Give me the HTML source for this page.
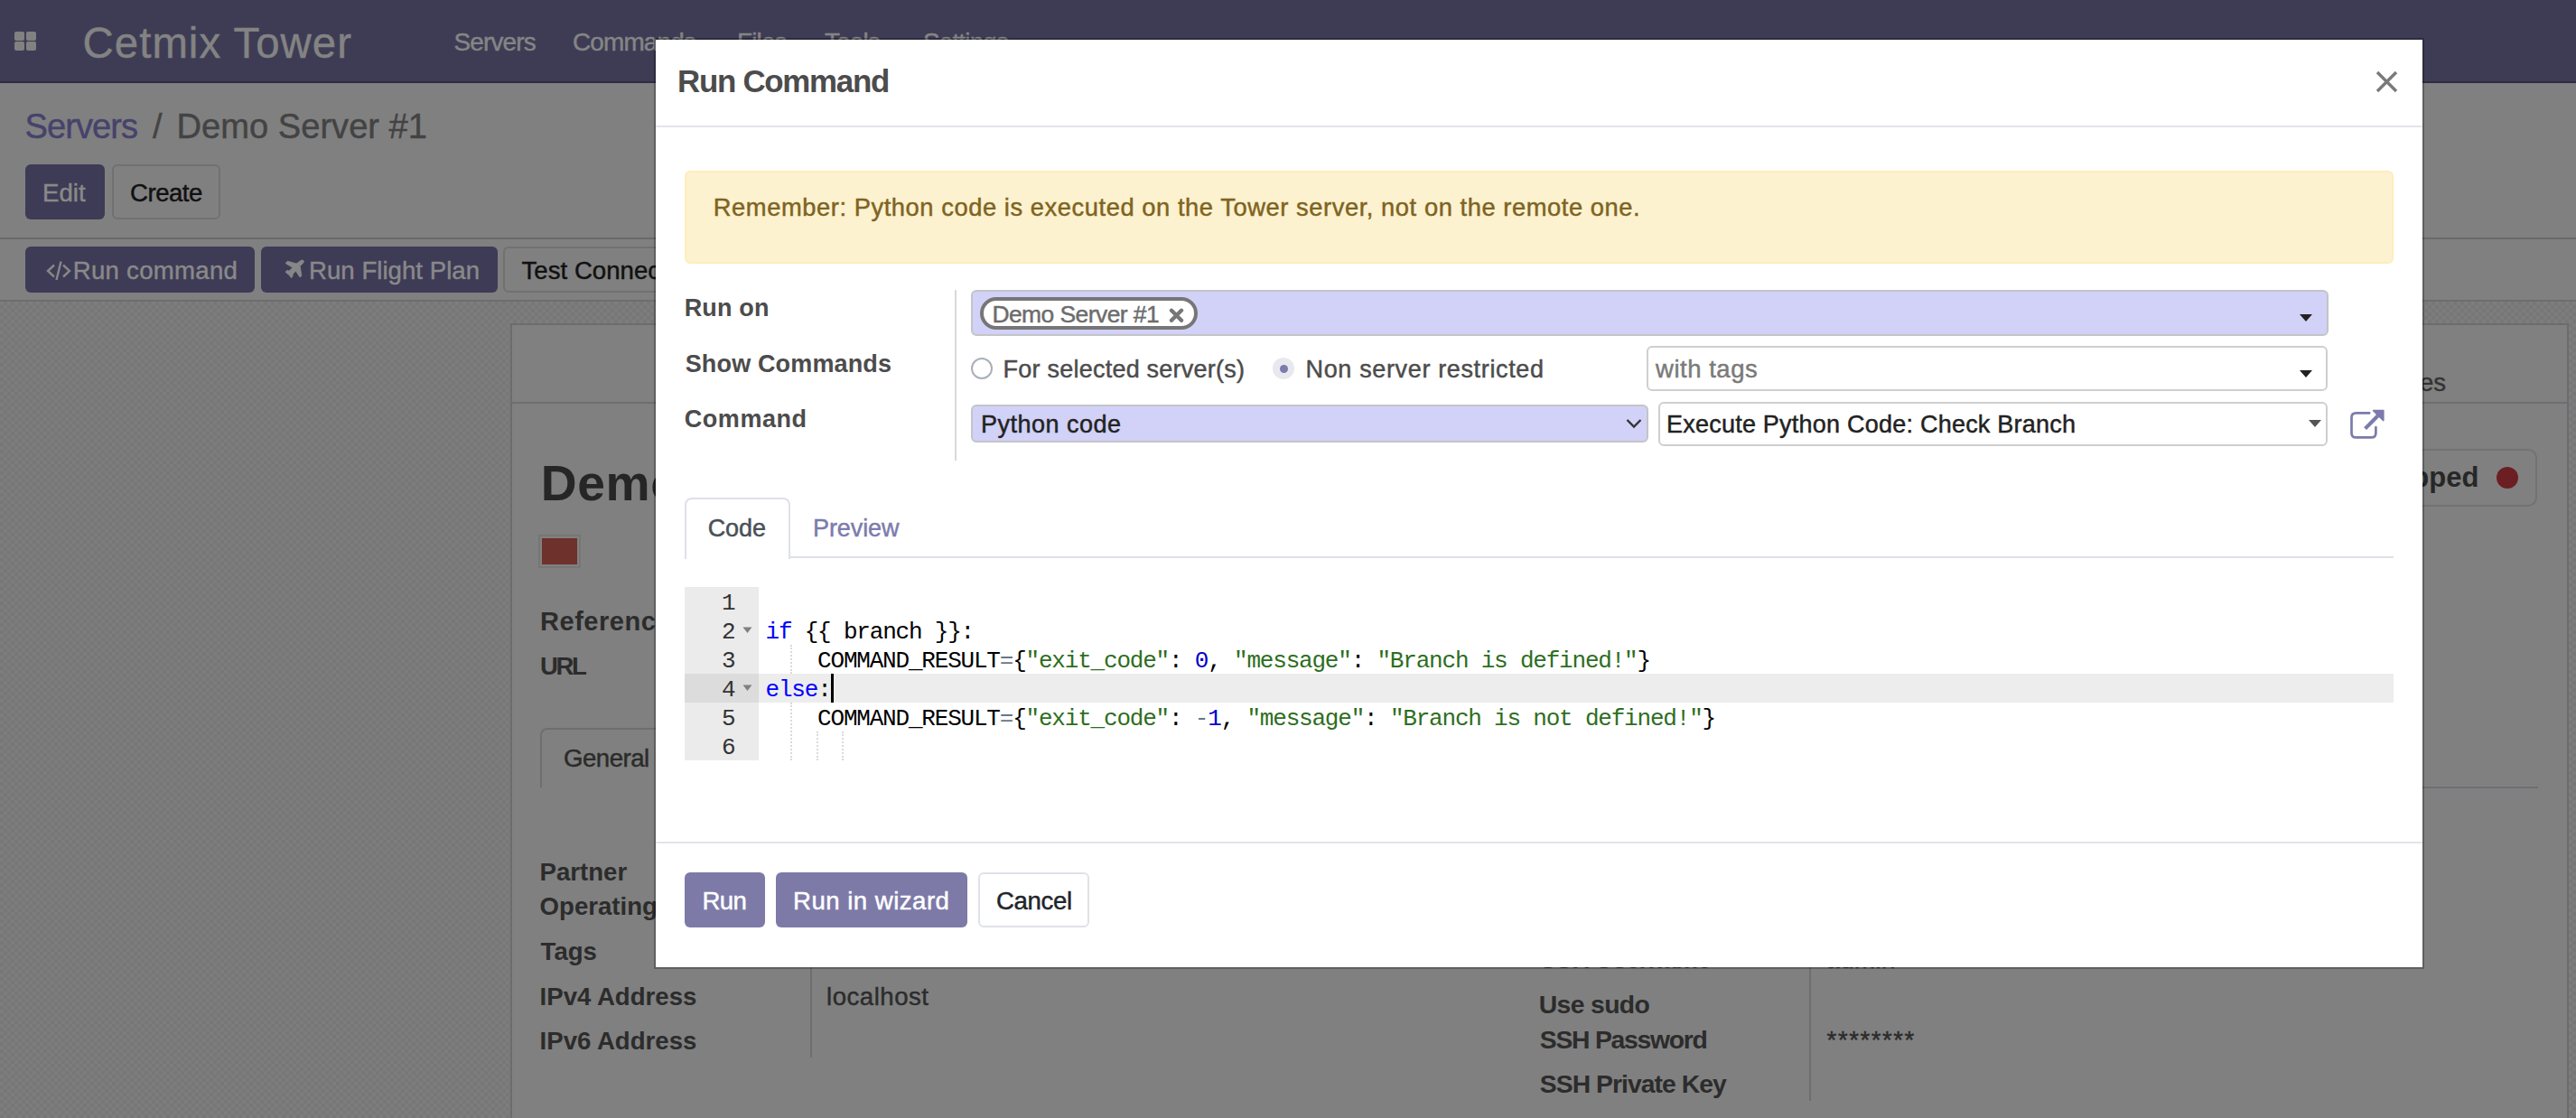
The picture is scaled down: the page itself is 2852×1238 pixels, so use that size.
<!DOCTYPE html>
<html><head><meta charset="utf-8"><title>Run Command</title>
<style>
html,body{margin:0;padding:0;width:2852px;height:1238px;overflow:hidden;background:#808080}
body{position:relative;font-family:'Liberation Sans',sans-serif}
.t{position:absolute;white-space:pre}
.code{position:absolute;white-space:pre;font-family:'Liberation Mono',monospace;font-size:26px;line-height:32px;letter-spacing:-1.2px;z-index:5}
</style></head><body>
<div style="position:absolute;left:0;top:0;width:2852px;height:90px;background:#3e3c55"></div>
<div style="position:absolute;left:0;top:90px;width:2852px;height:2px;background:#2e2c44"></div>
<div style="position:absolute;left:16px;top:35px;width:11px;height:10px;border-radius:2px;background:#818181"></div>
<div style="position:absolute;left:29px;top:35px;width:11px;height:10px;border-radius:2px;background:#818181"></div>
<div style="position:absolute;left:16px;top:46px;width:11px;height:10px;border-radius:2px;background:#818181"></div>
<div style="position:absolute;left:29px;top:46px;width:11px;height:10px;border-radius:2px;background:#818181"></div>
<div class="t" style="left:91.60px;top:23.78px;font-size:47.38px;line-height:47.38px;color:#838383;letter-spacing:1.022px;-webkit-text-stroke:0.45px #838383">Cetmix Tower</div>
<div class="t" style="left:502.60px;top:33.27px;font-size:27.91px;line-height:27.91px;color:#858585;letter-spacing:-0.841px;-webkit-text-stroke:0.45px #858585">Servers</div>
<div class="t" style="left:634.00px;top:33.27px;font-size:27.91px;line-height:27.91px;color:#858585;letter-spacing:-0.841px;-webkit-text-stroke:0.45px #858585">Commands</div>
<div class="t" style="left:816.00px;top:33.27px;font-size:27.91px;line-height:27.91px;color:#858585;letter-spacing:-0.841px;-webkit-text-stroke:0.45px #858585">Files</div>
<div class="t" style="left:913.00px;top:33.27px;font-size:27.91px;line-height:27.91px;color:#858585;letter-spacing:-0.841px;-webkit-text-stroke:0.45px #858585">Tools</div>
<div class="t" style="left:1022.00px;top:33.27px;font-size:27.91px;line-height:27.91px;color:#858585;letter-spacing:-0.841px;-webkit-text-stroke:0.45px #858585">Settings</div>
<div style="position:absolute;left:0;top:92px;width:2852px;height:241px;background:#808080"></div>
<div class="t" style="left:27.60px;top:120.76px;font-size:38.08px;line-height:38.08px;color:#45436b;letter-spacing:-0.959px;-webkit-text-stroke:0.45px #45436b">Servers</div>
<div class="t" style="left:169.00px;top:120.76px;font-size:38.08px;line-height:38.08px;color:#444444;letter-spacing:0.000px;-webkit-text-stroke:0.45px #444444">/</div>
<div class="t" style="left:195.60px;top:120.76px;font-size:38.08px;line-height:38.08px;color:#434343;letter-spacing:0.011px;-webkit-text-stroke:0.45px #434343">Demo Server #1</div>
<div style="position:absolute;left:28px;top:182px;width:88px;height:61px;border-radius:6px;background:#3e3b56"></div>
<div class="t" style="left:47.00px;top:199.62px;font-size:27.62px;line-height:27.62px;color:#898989;letter-spacing:0.032px;-webkit-text-stroke:0.45px #898989">Edit</div>
<div style="position:absolute;left:124px;top:182px;width:120px;height:61px;box-sizing:border-box;border-radius:6px;border:2px solid #717171"></div>
<div class="t" style="left:144.00px;top:199.62px;font-size:27.62px;line-height:27.62px;color:#111111;letter-spacing:-0.503px;-webkit-text-stroke:0.45px #111111">Create</div>
<div style="position:absolute;left:0;top:263px;width:2852px;height:2px;background:#6a6a6a"></div>
<div style="position:absolute;left:28px;top:273px;width:254px;height:51px;border-radius:6px;background:#3e3b56"></div>
<div class="t" style="left:80.70px;top:285.62px;font-size:27.62px;line-height:27.62px;color:#898989;letter-spacing:0.271px;-webkit-text-stroke:0.45px #898989">Run command</div>
<svg style="position:absolute;left:50px;top:287px" width="30" height="25" viewBox="0 0 30 25"><path d="M10 6.5 L3 13 L10 19.5 M20 6.5 L27 13 L20 19.5" stroke="#878787" stroke-width="2.4" fill="none"/><path d="M17.5 2.5 L12.5 23" stroke="#878787" stroke-width="2.4" fill="none"/></svg>
<div style="position:absolute;left:289px;top:273px;width:262px;height:51px;border-radius:6px;background:#3e3b56"></div>
<div class="t" style="left:342.00px;top:285.62px;font-size:27.62px;line-height:27.62px;color:#898989;letter-spacing:0.021px;-webkit-text-stroke:0.45px #898989">Run Flight Plan</div>
<svg style="position:absolute;left:305px;top:280px" width="40" height="35" viewBox="0 0 40 35"><path d="M30.8 8.3 Q32.2 9.2 30.6 11.2 L27.2 14.7 L28.8 25 Q28.6 26.6 26.8 26.8 L22.5 20 L19.2 23.6 L18.9 26.1 L17.5 27.8 L15.6 25 L11.2 21.4 L12.6 19.4 L15.1 20 L19 16.3 L11.6 11.9 Q11 10.6 13.5 9.3 L23.2 11.9 L27.8 8.6 Q29.6 7.6 30.8 8.3 Z" fill="#878787" stroke="#878787" stroke-width="0.8" stroke-linejoin="round"/></svg>
<div style="position:absolute;left:557px;top:273px;width:260px;height:51px;box-sizing:border-box;border-radius:6px;border:2px solid #717171"></div>
<div class="t" style="left:577.50px;top:285.62px;font-size:27.62px;line-height:27.62px;color:#111111;letter-spacing:0.021px;-webkit-text-stroke:0.45px #111111">Test Connection</div>
<div style="position:absolute;left:0;top:332px;width:2852px;height:2px;background:#6e6e6e"></div>
<div style="position:absolute;left:0;top:334px;width:2852px;height:904px;background-color:#7c7c7c;background-image:repeating-conic-gradient(#777777 0 25%, #7d7d7d 0 50%);background-size:8px 8px"></div>
<div style="position:absolute;left:565px;top:358px;width:2279px;height:900px;box-sizing:border-box;background:#808080;border:2px solid #6b6c70"></div>
<div style="position:absolute;left:567px;top:445px;width:2275px;height:2px;background:#6c6e72"></div>
<div class="t" style="left:2678.91px;top:409.52px;font-size:27.50px;line-height:27.50px;color:#333333;letter-spacing:0.000px;-webkit-text-stroke:0.45px #333333">es</div>
<div style="position:absolute;left:2600px;top:497px;width:209px;height:64px;box-sizing:border-box;border:2px solid #727272;border-radius:10px"></div>
<div class="t" style="left:2620.45px;top:513.15px;font-size:31.00px;line-height:31.00px;color:#272727;letter-spacing:0.000px;font-weight:bold">Stopped</div>
<div style="position:absolute;left:2764px;top:517px;width:24px;height:24px;border-radius:50%;background:#6b1f22"></div>
<div class="t" style="left:598.70px;top:508.23px;font-size:55.23px;line-height:55.23px;color:#262626;letter-spacing:0.600px;font-weight:bold">Demo Server #1</div>
<div style="position:absolute;left:596px;top:592px;width:47px;height:37px;box-sizing:border-box;border:2px solid #767676;background:#808080"><div style="position:absolute;left:2px;top:2px;width:39px;height:29px;background:#6e312b"></div></div>
<div class="t" style="left:598.00px;top:674.09px;font-size:29.07px;line-height:29.07px;color:#2c2c2c;letter-spacing:0.500px;font-weight:bold">Reference</div>
<div class="t" style="left:598.00px;top:723.62px;font-size:27.62px;line-height:27.62px;color:#2c2c2c;letter-spacing:-2.439px;font-weight:bold">URL</div>
<div style="position:absolute;left:598px;top:806px;width:200px;height:66px;box-sizing:border-box;border:2px solid #6c6e72;border-bottom:none;border-radius:8px 8px 0 0"></div>
<div class="t" style="left:624.00px;top:825.62px;font-size:27.62px;line-height:27.62px;color:#2b2b2b;letter-spacing:-0.515px;-webkit-text-stroke:0.45px #2b2b2b">General</div>
<div style="position:absolute;left:726px;top:871px;width:2084px;height:2px;background:#6c6e72"></div>
<div class="t" style="left:597.60px;top:1089.62px;font-size:27.62px;line-height:27.62px;color:#2c2c2c;letter-spacing:-0.017px;font-weight:bold">IPv4 Address</div>
<div class="t" style="left:597.60px;top:951.62px;font-size:27.62px;line-height:27.62px;color:#2c2c2c;letter-spacing:-0.017px;font-weight:bold">Partner</div>
<div class="t" style="left:597.60px;top:989.62px;font-size:27.62px;line-height:27.62px;color:#2c2c2c;letter-spacing:-0.017px;font-weight:bold">Operating System</div>
<div class="t" style="left:598.60px;top:1039.62px;font-size:27.62px;line-height:27.62px;color:#2c2c2c;letter-spacing:-0.017px;font-weight:bold">Tags</div>
<div class="t" style="left:597.60px;top:1138.62px;font-size:27.62px;line-height:27.62px;color:#2c2c2c;letter-spacing:-0.017px;font-weight:bold">IPv6 Address</div>
<div style="position:absolute;left:897px;top:940px;width:2px;height:231px;background:#6e6e6e"></div>
<div class="t" style="left:915.00px;top:1089.62px;font-size:27.62px;line-height:27.62px;color:#2c2c2c;letter-spacing:0.500px;-webkit-text-stroke:0.45px #2c2c2c">localhost</div>
<div class="t" style="left:1704.80px;top:1048.00px;font-size:28.34px;line-height:28.34px;color:#2c2c2c;letter-spacing:-1.196px;font-weight:bold">SSH Username</div>
<div class="t" style="left:1703.80px;top:1097.80px;font-size:28.34px;line-height:28.34px;color:#2c2c2c;letter-spacing:-0.643px;font-weight:bold">Use sudo</div>
<div class="t" style="left:1704.80px;top:1137.00px;font-size:28.34px;line-height:28.34px;color:#2c2c2c;letter-spacing:-1.258px;font-weight:bold">SSH Password</div>
<div class="t" style="left:1704.80px;top:1186.00px;font-size:28.34px;line-height:28.34px;color:#2c2c2c;letter-spacing:-0.963px;font-weight:bold">SSH Private Key</div>
<div style="position:absolute;left:2003px;top:940px;width:2px;height:279px;background:#6e6e6e"></div>
<div class="t" style="left:2021.60px;top:1048.62px;font-size:27.62px;line-height:27.62px;color:#2c2c2c;letter-spacing:0.389px;-webkit-text-stroke:0.45px #2c2c2c">admin</div>
<div class="t" style="left:2022.60px;top:1137.72px;font-size:27.50px;line-height:27.50px;color:#2c2c2c;letter-spacing:1.584px;-webkit-text-stroke:0.45px #2c2c2c">********</div>
<div style="position:absolute;left:724px;top:42px;width:1960px;height:1031px;background:rgba(0,0,0,0.26)"></div>
<div style="position:absolute;left:726px;top:44px;width:1956px;height:1027px;background:#fff"></div>
<div class="t" style="left:750.00px;top:73.46px;font-size:34.88px;line-height:34.88px;color:#4c4c4c;letter-spacing:-1.269px;font-weight:bold">Run Command</div>
<svg style="position:absolute;left:2630px;top:78px" width="25" height="25" viewBox="0 0 25 25"><path d="M2 2 L23 23 M23 2 L2 23" stroke="#7a7a7a" stroke-width="3.4" fill="none"/></svg>
<div style="position:absolute;left:726px;top:139px;width:1956px;height:2px;background:#e2e4ea"></div>
<div style="position:absolute;left:758px;top:189px;width:1892px;height:103px;box-sizing:border-box;background:#fcf2cf;border:2px solid #fdedbb;border-radius:6px"></div>
<div class="t" style="left:789.80px;top:215.86px;font-size:27.33px;line-height:27.33px;color:#7f6322;letter-spacing:0.553px;-webkit-text-stroke:0.45px #7f6322">Remember: Python code is executed on the Tower server, not on the remote one.</div>
<div class="t" style="left:757.70px;top:328.11px;font-size:27.03px;line-height:27.03px;color:#4c4c4c;letter-spacing:0.139px;font-weight:bold">Run on</div>
<div class="t" style="left:758.70px;top:390.11px;font-size:27.03px;line-height:27.03px;color:#4c4c4c;letter-spacing:0.139px;font-weight:bold">Show Commands</div>
<div class="t" style="left:757.70px;top:451.11px;font-size:27.03px;line-height:27.03px;color:#4c4c4c;letter-spacing:0.553px;font-weight:bold">Command</div>
<div style="position:absolute;left:1057px;top:321px;width:2px;height:189px;background:#d9d9d9"></div>
<div style="position:absolute;left:1075px;top:321px;width:1503px;height:51px;box-sizing:border-box;background:#d2d1f7;border:2px solid #c4c4c8;border-radius:6px"></div>
<div style="position:absolute;left:1085px;top:329px;width:241px;height:36px;box-sizing:border-box;background:#fff;border:4px solid #767676;border-radius:18px"></div>
<div class="t" style="left:1098.40px;top:335.20px;font-size:26.45px;line-height:26.45px;color:#6c6c6c;letter-spacing:-0.552px;-webkit-text-stroke:0.45px #6c6c6c">Demo Server #1</div>
<svg style="position:absolute;left:1294px;top:341px" width="17" height="16" viewBox="0 0 17 16"><path d="M3 2.8 L14 13.8 M14 2.8 L3 13.8" stroke="#777" stroke-width="4.4" stroke-linecap="round" fill="none"/></svg>
<svg style="position:absolute;left:2546px;top:348px" width="14" height="8" viewBox="0 0 14 8"><path d="M0 0 H14 L7 8 Z" fill="#222"/></svg>
<div style="position:absolute;left:1075px;top:396px;width:24px;height:24px;box-sizing:border-box;border-radius:50%;background:#fff;border:2px solid #a9b0b9"></div>
<div class="t" style="left:1110.50px;top:396.11px;font-size:27.03px;line-height:27.03px;color:#4c4c4c;letter-spacing:0.228px;-webkit-text-stroke:0.45px #4c4c4c">For selected server(s)</div>
<div style="position:absolute;left:1409px;top:396px;width:24px;height:24px;border-radius:50%;background:#e8e9ef"></div>
<div style="position:absolute;left:1416.5px;top:403.5px;width:9px;height:9px;border-radius:50%;background:#7c7bab"></div>
<div class="t" style="left:1445.50px;top:396.11px;font-size:27.03px;line-height:27.03px;color:#4c4c4c;letter-spacing:0.640px;-webkit-text-stroke:0.45px #4c4c4c">Non server restricted</div>
<div style="position:absolute;left:1823px;top:383px;width:754px;height:50px;box-sizing:border-box;background:#fff;border:2px solid #cfcfcf;border-radius:6px"></div>
<div class="t" style="left:1833.00px;top:395.32px;font-size:27.50px;line-height:27.50px;color:#7a7a7a;letter-spacing:0.528px;-webkit-text-stroke:0.45px #7a7a7a">with tags</div>
<svg style="position:absolute;left:2546px;top:410px" width="14" height="8" viewBox="0 0 14 8"><path d="M0 0 H14 L7 8 Z" fill="#222"/></svg>
<div style="position:absolute;left:1075px;top:448px;width:750px;height:42px;box-sizing:border-box;background:#d2d1f7;border:2px solid #c4c4c8;border-radius:6px"></div>
<div class="t" style="left:1086.00px;top:457.11px;font-size:27.03px;line-height:27.03px;color:#222222;letter-spacing:0.483px;-webkit-text-stroke:0.45px #222222">Python code</div>
<svg style="position:absolute;left:1800px;top:463px" width="18" height="12" viewBox="0 0 18 12"><path d="M1.5 2 L9 9.5 L16.5 2" stroke="#333" stroke-width="2.4" fill="none"/></svg>
<div style="position:absolute;left:1836px;top:445px;width:741px;height:49px;box-sizing:border-box;background:#fff;border:2px solid #cfcfcf;border-radius:6px"></div>
<div class="t" style="left:1845.00px;top:457.11px;font-size:27.03px;line-height:27.03px;color:#222222;letter-spacing:0.219px;-webkit-text-stroke:0.45px #222222">Execute Python Code: Check Branch</div>
<svg style="position:absolute;left:2556px;top:465px" width="14" height="8" viewBox="0 0 14 8"><path d="M0 0 H14 L7 8 Z" fill="#555"/></svg>
<svg style="position:absolute;left:2596px;top:446px" width="50" height="44" viewBox="0 0 50 44"><path d="M27.2 11.4 H12.5 Q7.5 11.4 7.5 16.4 V33.4 Q7.5 38.4 12.5 38.4 H29.4 Q34.4 38.4 34.4 33.4 V27.2" stroke="#7c7bab" stroke-width="2.7" stroke-linecap="round" fill="none"/><path d="M31.6 8.6 H42.8 V19.6 Z" fill="#7c7bab" stroke="#7c7bab" stroke-width="1.6" stroke-linejoin="round"/><path d="M22.6 28.6 L37.5 13.5" stroke="#7c7bab" stroke-width="4.2" fill="none"/></svg>
<div style="position:absolute;left:758px;top:551px;width:117px;height:68px;box-sizing:border-box;background:#fff;border:2px solid #dee1e8;border-bottom:none;border-radius:8px 8px 0 0;z-index:2"></div>
<div style="position:absolute;left:758px;top:616px;width:1892px;height:2px;background:#dee1e8;z-index:1"></div>
<div style="position:absolute;left:760px;top:616px;width:113px;height:3px;background:#fff;z-index:3"></div>
<div class="t" style="left:783.70px;top:571.61px;font-size:27.03px;line-height:27.03px;color:#495057;letter-spacing:-0.086px;-webkit-text-stroke:0.45px #495057;z-index:4">Code</div>
<div class="t" style="left:900.00px;top:571.61px;font-size:27.03px;line-height:27.03px;color:#7c7bad;letter-spacing:-0.096px;-webkit-text-stroke:0.45px #7c7bad;z-index:4">Preview</div>
<div style="position:absolute;left:758px;top:650px;width:82px;height:192px;background:#ebebeb"></div>
<div style="position:absolute;left:758px;top:746px;width:82px;height:32px;background:#dcdcdc"></div>
<div style="position:absolute;left:840px;top:746px;width:1810px;height:32px;background:#ededed"></div>
<div class="t" style="left:799.00px;top:655.08px;font-size:26.00px;line-height:26.00px;color:#333333;letter-spacing:-1.200px;font-family:'Liberation Mono',monospace">1</div>
<div class="t" style="left:799.00px;top:687.08px;font-size:26.00px;line-height:26.00px;color:#333333;letter-spacing:-1.200px;font-family:'Liberation Mono',monospace">2</div>
<div class="t" style="left:799.00px;top:719.08px;font-size:26.00px;line-height:26.00px;color:#333333;letter-spacing:-1.200px;font-family:'Liberation Mono',monospace">3</div>
<div class="t" style="left:799.00px;top:751.08px;font-size:26.00px;line-height:26.00px;color:#333333;letter-spacing:-1.200px;font-family:'Liberation Mono',monospace">4</div>
<div class="t" style="left:799.00px;top:783.08px;font-size:26.00px;line-height:26.00px;color:#333333;letter-spacing:-1.200px;font-family:'Liberation Mono',monospace">5</div>
<div class="t" style="left:799.00px;top:815.08px;font-size:26.00px;line-height:26.00px;color:#333333;letter-spacing:-1.200px;font-family:'Liberation Mono',monospace">6</div>
<svg style="position:absolute;left:822px;top:694px" width="11" height="8" viewBox="0 0 11 8"><path d="M0.5 0.5 H10.5 L5.5 7 Z" fill="#808080"/></svg>
<svg style="position:absolute;left:822px;top:758px" width="11" height="8" viewBox="0 0 11 8"><path d="M0.5 0.5 H10.5 L5.5 7 Z" fill="#808080"/></svg>
<div style="position:absolute;left:875px;top:714px;width:0;height:32px;border-left:2px dotted #dadada"></div>
<div style="position:absolute;left:875px;top:778px;width:0;height:64px;border-left:2px dotted #dadada"></div>
<div style="position:absolute;left:904px;top:810px;width:0;height:32px;border-left:2px dotted #dadada"></div>
<div style="position:absolute;left:932px;top:810px;width:0;height:32px;border-left:2px dotted #dadada"></div>
<div style="position:absolute;left:920px;top:746px;width:3px;height:32px;background:#000"></div>
<div style="position:absolute;left:726px;top:932px;width:1956px;height:2px;background:#e2e4ea"></div>
<div style="position:absolute;left:758px;top:966px;width:89px;height:61px;border-radius:6px;background:#7d7aa8"></div>
<div class="t" style="left:777.40px;top:983.62px;font-size:27.62px;line-height:27.62px;color:#ffffff;letter-spacing:-0.647px;-webkit-text-stroke:0.45px #ffffff">Run</div>
<div style="position:absolute;left:859px;top:966px;width:212px;height:61px;border-radius:6px;background:#7d7aa8"></div>
<div class="t" style="left:878.00px;top:983.62px;font-size:27.62px;line-height:27.62px;color:#ffffff;letter-spacing:0.475px;-webkit-text-stroke:0.45px #ffffff">Run in wizard</div>
<div style="position:absolute;left:1083px;top:966px;width:123px;height:61px;box-sizing:border-box;border-radius:6px;border:2px solid #dfe2e8;background:#fff"></div>
<div class="t" style="left:1103.00px;top:983.62px;font-size:27.62px;line-height:27.62px;color:#212529;letter-spacing:-0.362px;-webkit-text-stroke:0.45px #212529">Cancel</div>
<div class="code" style="left:847.5px;top:684.08px"><span style="color:#0000ff">if</span><span style="color:#000000"> {{ branch }}:</span></div>
<div class="code" style="left:847.5px;top:716.08px"><span style="color:#000000">    COMMAND_RESULT</span><span style="color:#687687">=</span><span style="color:#000000">{</span><span style="color:#2e6e1e">&quot;exit_code&quot;</span><span style="color:#000000">: </span><span style="color:#0000cd">0</span><span style="color:#000000">, </span><span style="color:#2e6e1e">&quot;message&quot;</span><span style="color:#000000">: </span><span style="color:#2e6e1e">&quot;Branch is defined!&quot;</span><span style="color:#000000">}</span></div>
<div class="code" style="left:847.5px;top:748.08px"><span style="color:#0000ff">else</span><span style="color:#000000">:</span></div>
<div class="code" style="left:847.5px;top:780.08px"><span style="color:#000000">    COMMAND_RESULT</span><span style="color:#687687">=</span><span style="color:#000000">{</span><span style="color:#2e6e1e">&quot;exit_code&quot;</span><span style="color:#000000">: </span><span style="color:#687687">-</span><span style="color:#0000cd">1</span><span style="color:#000000">, </span><span style="color:#2e6e1e">&quot;message&quot;</span><span style="color:#000000">: </span><span style="color:#2e6e1e">&quot;Branch is not defined!&quot;</span><span style="color:#000000">}</span></div>
</body></html>
